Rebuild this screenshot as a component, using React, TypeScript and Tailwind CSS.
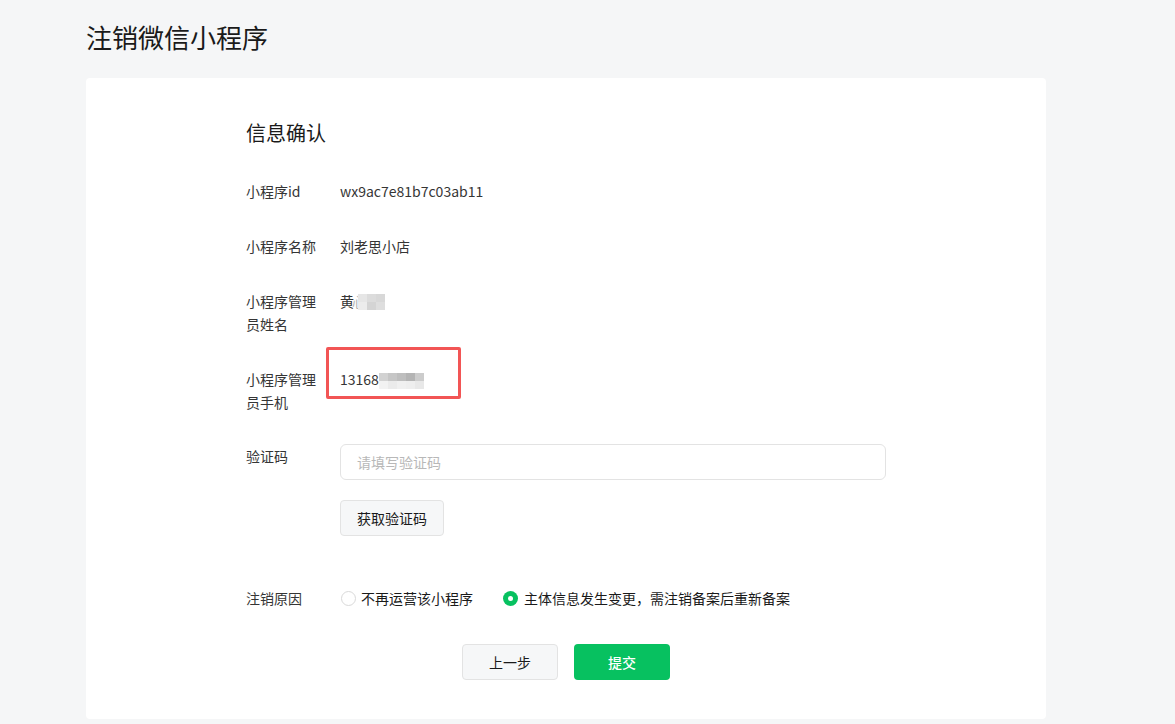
import React from 'react';

const FONT = { fontFamily: '"Noto Sans CJK SC", "Noto Sans", sans-serif' };

function Mosaic({ cells }: { cells: string[][] }) {
  return (
    <span className="inline-flex flex-col align-middle">
      {cells.map((row, r) => (
        <span key={r} className="flex">
          {row.map((c, i) => (
            <span key={i} className="block w-[9px] h-[8px]" style={{ backgroundColor: c }} />
          ))}
        </span>
      ))}
    </span>
  );
}

function Row({ label, children, className = '' }: { label: string; children: React.ReactNode; className?: string }) {
  return (
    <div className={`flex items-start ${className}`}>
      <div className="w-[94px] shrink-0 pr-[14px] text-[14px] leading-[23px] text-[#353535]">{label}</div>
      <div className="relative flex-1 text-[14px] leading-[23px] text-[#353535]">{children}</div>
    </div>
  );
}

export default function App() {
  return (
    <div className="min-h-[724px] bg-[#f5f6f7] pl-[86px] pt-[18px]" style={FONT}>
      <h1 className="text-[26px] leading-[38px] text-[#1a1a1a]">注销微信小程序</h1>
      <div className="mt-[22px] w-[960px] h-[641px] rounded-[4px] bg-white pl-[160px] pt-[41px]">
        <h2 className="text-[20px] leading-[28px] text-[#1a1a1a]">信息确认</h2>

        <div className="mt-[33px] flex flex-col gap-[32px]">
          <Row label="小程序id">wx9ac7e81b7c03ab11</Row>
          <Row label="小程序名称">刘老思小店</Row>
          <Row label="小程序管理员姓名">
            <span className="inline-flex items-center">
              黄<span className="-ml-[2px] text-[#b5b5b5]">心</span>
              <span className="-ml-[8px] -mt-[2px]">
                <Mosaic cells={[["#e6e6e6", "#dcdcdc", "#d8d8d8"], ["#ececec", "#d4d4d4", "#dedede"]]} />
              </span>
            </span>
          </Row>
          <Row label="小程序管理员手机">
            <span className="inline-flex items-center">
              13168
              <span className="-mt-[1px]">
                <Mosaic
                  cells={[
                    ["#d2d2d2", "#c6c6c6", "#bebebe", "#b4b4b4", "#cccccc"],
                    ["#f2f2f2", "#ebebeb", "#f0f0f0", "#eeeeee", "#e8e8e8"],
                  ]}
                />
              </span>
            </span>
            <div className="pointer-events-none absolute -left-[14px] -top-[21px] h-[52px] w-[135px] rounded-[2px] border-[3px] border-[#f25555]" />
          </Row>
          <Row label="验证码" className="-mt-[1px]">
            <div className="-mt-[1px] flex h-[36px] w-[546px] items-center rounded-[6px] border border-[#e3e3e3] px-[16px] text-[14px] text-[#b8b8b8]">
              请填写验证码
            </div>
            <button className="mt-[20px] h-[36px] w-[104px] rounded-[4px] border border-[#e3e3e3] bg-[#f6f7f8] text-[14px] text-[#1a1a1a]">
              获取验证码
            </button>
          </Row>
        </div>

        <div className="mt-[51px]">
          <Row label="注销原因">
            <div className="flex items-center">
              <span className="ml-[1px] block h-[15px] w-[15px] rounded-full border border-[#d9d9d9] bg-white" />
              <span className="ml-[5px] text-[#1a1a1a]">不再运营该小程序</span>
              <span className="ml-[30px] flex h-[15px] w-[15px] items-center justify-center rounded-full bg-[#07c160]">
                <span className="block h-[5px] w-[5px] rounded-full bg-white" />
              </span>
              <span className="ml-[6px] text-[#1a1a1a]">主体信息发生变更，需注销备案后重新备案</span>
            </div>
          </Row>
        </div>

        <div className="mt-[34px] -ml-[160px] flex justify-center gap-[16px]">
          <button className="h-[36px] w-[96px] rounded-[4px] border border-[#e3e3e3] bg-[#f6f7f8] text-[14px] text-[#1a1a1a]">
            上一步
          </button>
          <button className="h-[36px] w-[96px] rounded-[4px] bg-[#07c160] text-[14px] font-medium text-white">
            提交
          </button>
        </div>
      </div>
    </div>
  );
}
